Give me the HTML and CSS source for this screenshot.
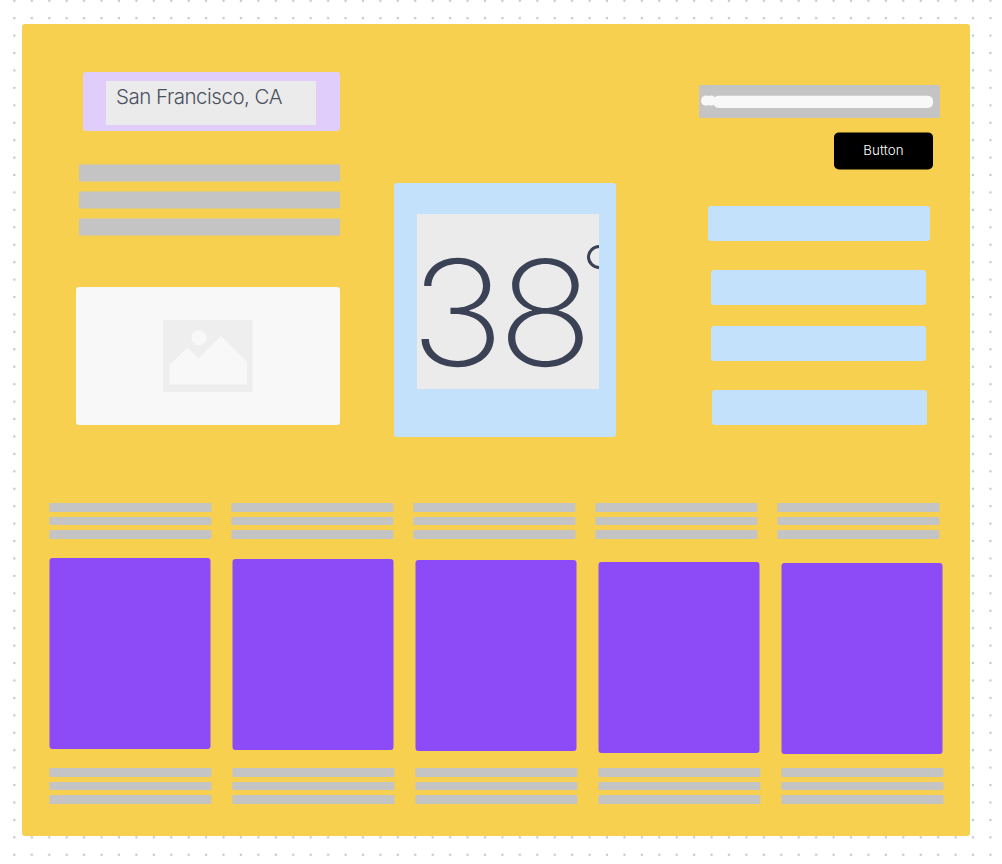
FILE: index.html
```html
<!DOCTYPE html>
<html lang="en">
<head>
<meta charset="utf-8">
<title>Weather wireframe</title>
<link rel="stylesheet" href="styles.css">
</head>
<body>
<svg class="dot-grid" width="1002" height="864" aria-hidden="true">
  <defs>
    <pattern id="dots" x="5.7" y="-8" width="17.43" height="17.43" patternUnits="userSpaceOnUse">
      <circle cx="8.7" cy="8.7" r="1.25" fill="#c6c6c6"/>
    </pattern>
  </defs>
  <rect x="10" width="992" height="864" fill="url(#dots)"/>
</svg>
<main class="board">
  <section class="top">
    <div class="left">
      <div class="location"><div class="location-text">San Francisco, CA</div></div>
      <div class="summary"><i></i><i></i><i></i></div>
      <div class="image-box">
        <svg width="90" height="73" viewBox="0 0 90 73">
          <path d="M0 0H89.5V72H0Z" fill="#eeeeee"/>
          <circle cx="36" cy="17.7" r="7.5" fill="#f8f8f8"/>
          <path d="M6.5 45L24.3 27.5L35.5 38.5L58 16L84 42V64.5H6.5Z" fill="#f8f8f8"/>
        </svg>
      </div>
    </div>
    <div class="center">
      <div class="temperature"><span class="digits">38</span><span class="degree"></span></div>
    </div>
    <div class="right">
      <div class="search">
        <svg width="241" height="33" viewBox="0 0 241 33" fill="#f8f8f8">
          <circle cx="7.1" cy="15.7" r="5.1"/>
          <circle cx="12" cy="15.7" r="5.1"/>
          <rect x="14.5" y="10.8" width="219.5" height="12.1" rx="5"/>
        </svg>
      </div>
      <button class="button">Button</button>
      <div class="option wide"></div>
      <div class="option second"></div>
      <div class="option third"></div>
      <div class="option fourth"></div>
    </div>
  </section>
  <section class="lines headings">
    <div><i></i><i></i><i></i></div>
    <div><i></i><i></i><i></i></div>
    <div><i></i><i></i><i></i></div>
    <div><i></i><i></i><i></i></div>
    <div><i></i><i></i><i></i></div>
  </section>
  <section class="cards">
    <div class="card c1"></div>
    <div class="card c2"></div>
    <div class="card c3"></div>
    <div class="card c4"></div>
    <div class="card c5"></div>
  </section>
  <section class="lines captions">
    <div><i></i><i></i><i></i></div>
    <div><i></i><i></i><i></i></div>
    <div><i></i><i></i><i></i></div>
    <div><i></i><i></i><i></i></div>
    <div><i></i><i></i><i></i></div>
  </section>
</main>
</body>
</html>
```
FILE: styles.css
```css
* { box-sizing: border-box; }
body {
  margin: 0;
  height: 864px;
  padding: 24px 32px 28px 22px;
  background: #fff;
  overflow: hidden;
  font-family: Inter, "Liberation Sans", sans-serif;
}
.dot-grid { position: absolute; inset: 0; z-index: -1; }
.board {
  width: 948px;
  height: 812px;
  padding-left: 27px;
  background: #f7d050;
  border-radius: 3px;
}
.top { display: flex; height: 479px; padding-left: 27px; }
.left {
  display: flex;
  flex-direction: column;
  align-items: flex-end;
  width: 264px;
  padding-top: 48px;
}
.location {
  width: 257px;
  height: 59px;
  padding: 9px 23px;
  background: #e0cdfb;
  border-radius: 3px;
}
.location-text {
  width: 210px;
  height: 44px;
  padding: 4px 0 0 10px;
  background: #ebebeb;
  color: #4c5160;
  font-size: 20.5px;
  font-weight: 300;
  line-height: 24px;
  letter-spacing: -0.5px;
  white-space: nowrap;
}
.summary {
  display: flex;
  flex-direction: column;
  gap: 10px;
  width: 261px;
  margin-top: 33px;
  transform: translateY(0.5px);
}
.summary i { height: 17px; background: #c4c4c4; border-radius: 1px; }
.image-box {
  display: flex;
  width: 264px;
  height: 138px;
  margin-top: 52px;
  padding: 33px 0 0 87px;
  background: #f8f8f8;
  border-radius: 3px;
}
.center {
  width: 222px;
  height: 254px;
  margin: 159px 0 0 54px;
  padding: 31px 0 0 23px;
  background: #c4e1fc;
  border-radius: 3px;
}
.temperature {
  position: relative;
  width: 182px;
  height: 175px;
  overflow: hidden;
  background: #ebebeb;
  color: #3c4255;
}
.digits {
  display: block;
  width: 170px;
  margin-left: -7px;
  padding-top: 29px;
  font-size: 147px;
  font-weight: 200;
  line-height: 140px;
  letter-spacing: -6.8px;
  white-space: nowrap;
  transform: scaleX(1.085);
  transform-origin: left;
}
.degree {
  position: absolute;
  left: 169.5px;
  top: 31px;
  width: 25px;
  height: 24px;
  border: 3.4px solid #3c4255;
  border-radius: 50%;
}
.right { width: 241px; margin-left: 83px; padding-top: 61px; }
.search { width: 241px; height: 33px; background: #c4c4c4; border-radius: 2px; }
.search svg { display: block; }
.button {
  display: block;
  width: 99px;
  height: 37px;
  margin: 14px 0 0 135px;
  padding: 0;
  border: 0;
  border-radius: 5px;
  background: #000;
  color: #fff;
  font: 300 13.3px/37px Inter, sans-serif;
  letter-spacing: 0.1px;
  transform: translateY(0.4px);
}
.option {
  width: 215px;
  height: 35px;
  margin-left: 12px;
  background: #c4e1fc;
  border-radius: 3px;
}
.option.wide { width: 222px; margin: 37px 0 0 9px; }
.option.second { margin-top: 29px; }
.option.third { margin-top: 21px; }
.option.fourth { margin: 29px 0 0 13px; }
.lines { display: flex; gap: 20px; height: 37px; transform: translateX(0.4px); }
.lines div { display: flex; flex-direction: column; gap: 5px; width: 162px; }
.lines i { height: 8.6px; background: #c4c4c4; border-radius: 1px; }
.captions { gap: 21px; }
.cards { display: flex; gap: 22px; height: 228px; padding-top: 18px; transform: translateX(0.5px); }
.card { width: 161px; height: 191px; background: #8c4bf6; border-radius: 3px; }
.c2 { margin-top: 1px; }
.c3 { margin-top: 2px; }
.c4 { margin-top: 4px; }
.c5 { margin-top: 5px; }
```
